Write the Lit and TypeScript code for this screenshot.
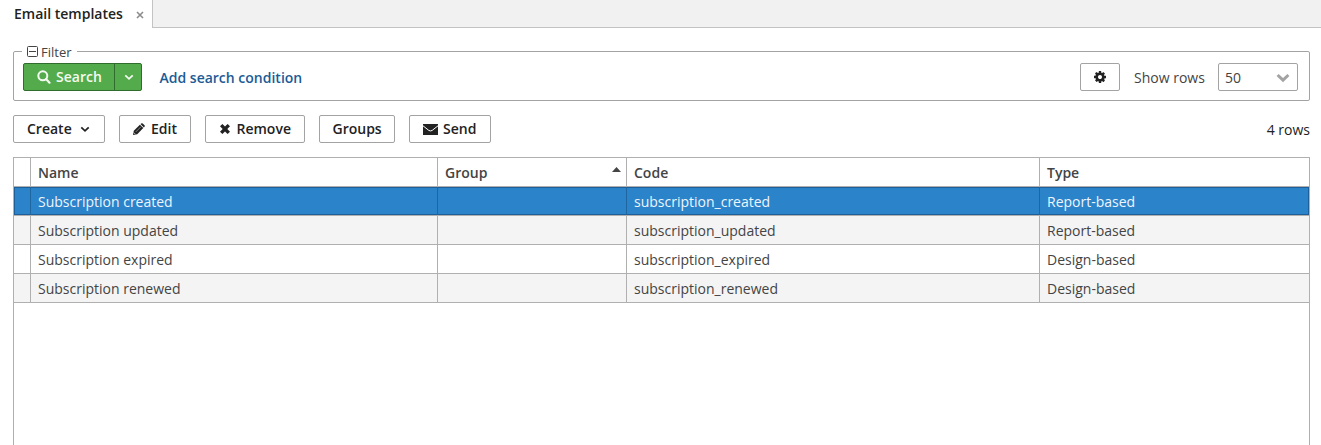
import { LitElement, html, css, svg } from "lit";
import { customElement, property } from "lit/decorators.js";

const icons: Record<string, { box: string; body: unknown }> = {
  search: {
    box: "0 0 14 14",
    body: svg`<circle cx="5.8" cy="5.8" r="4.5" fill="none" stroke="currentColor" stroke-width="2"/><path d="M9 9l3.500 3.700" fill="none" stroke="currentColor" stroke-width="2.200" stroke-linecap="round"/>`,
  },
  chevron: {
    box: "0 0 10 10",
    body: svg`<path d="M1.3 3.4L5 6.8L8.7 3.4" fill="none" stroke="currentColor" stroke-width="1.8"/>`,
  },
  pencil: {
    box: "0 0 12 12",
    body: svg`<path d="M0 12L.8 7.800 6.900 1.700 10.300 5.100 4.200 11.200z"/><path d="M7.500 1.100L8.300.4Q9-.1 9.700.5L11.500 2.300Q12.100 3 11.500 3.700L10.900 4.500z"/><path d="M2.800 8.900L7.900 3.800" stroke="#fff" stroke-width=".45"/><path d="M.8 9.600L2.400 11.200" stroke="#fff" stroke-width=".7"/>`,
  },
  cross: {
    box: "0 0 12 12",
    body: svg`<path d="M1 3.200L3.400 1 6 3.500 8.600 1 11 3.200 8.300 6 11 8.800 8.600 11 6 8.500 3.400 11 1 8.800 3.700 6z"/>`,
  },
  envelope: {
    box: "0 0 15 11",
    body: svg`<path d="M0 0h15v11H0z"/><path d="M0 1.800L5.800 6.400Q7.500 7.500 9.200 6.400L15 1.800" fill="none" stroke="#fff" stroke-width="1"/>`,
  },
  gear: {
    box: "0 0 1792 1792",
    body: svg`<path d="M1152 896q0-106-75-181t-181-75-181 75-75 181 75 181 181 75 181-75 75-181zm512-109v222q0 12-8 23t-20 13l-185 28q-19 54-39 91 35 50 107 138 10 12 10 25t-9 23q-27 37-99 108t-94 71q-12 0-26-9l-138-108q-44 23-91 38-16 136-29 186-7 28-36 28h-222q-14 0-24.500-8.500t-11.500-21.500l-28-184q-49-16-90-37l-141 107q-10 9-25 9-14 0-25-11-126-114-165-168-7-10-7-23 0-12 8-23 15-21 51-66.500t54-70.500q-27-50-41-99l-183-27q-13-2-21-12.500t-8-23.500v-222q0-12 8-23t19-13l186-28q14-46 39-92-40-57-107-138-10-12-10-24 0-10 9-23 26-36 98.500-107.500t94.500-71.500q13 0 26 10l138 107q44-23 91-38 16-136 29-186 7-28 36-28h222q14 0 24.500 8.500t11.500 21.500l28 184q49 16 90 37l142-107q9-9 24-9 13 0 25 10 129 119 165 170 7 8 7 22 0 12-8 23-15 21-51 66.500t-54 70.500q26 50 41 98l183 28q13 2 21 12.500t8 23.500z"/>`,
  },
  selectArrow: {
    box: "0 0 14 10",
    body: svg`<path d="M1.600 2L7 7.200 12.400 2" fill="none" stroke="currentColor" stroke-width="3"/>`,
  },
  close: {
    box: "0 0 8 8",
    body: svg`<path d="M1 1l6 6M7 1L1 7" stroke="currentColor" stroke-width="1.600"/>`,
  },
  collapse: {
    box: "0 0 11 11",
    body: svg`<rect x=".5" y=".5" width="10" height="10" rx="1" fill="none" stroke="currentColor"/><path d="M2 5.500h7" stroke="currentColor"/>`,
  },
  sortUp: { box: "0 0 9 5", body: svg`<path d="M0 5L4.500 0 9 5z"/>` },
};

@customElement("ui-icon")
export class UiIcon extends LitElement {
  @property() name = "";
  @property({ type: Number }) width = 12;
  @property({ type: Number }) height = 12;
  static styles = css`
    :host { display: inline-flex; flex: none; }
    svg { display: block; fill: currentColor; }
  `;
  render() {
    const icon = icons[this.name];
    return html`<svg width=${this.width} height=${this.height} viewBox=${icon.box}>${icon.body}</svg>`;
  }
}

const rows = [
  ["Subscription created", "", "subscription_created", "Report-based"],
  ["Subscription updated", "", "subscription_updated", "Report-based"],
  ["Subscription expired", "", "subscription_expired", "Design-based"],
  ["Subscription renewed", "", "subscription_renewed", "Design-based"],
];

@customElement("app-root")
export class AppRoot extends LitElement {
  static styles = css`
    :host {
      display: flex; flex-direction: column; height: 445px; overflow: hidden;
      box-sizing: border-box; background: #fff; color: #444;
      font: 14px/20px "Open Sans", sans-serif;
    }
    * { box-sizing: border-box; }
    .tabs { display: flex; height: 28px; flex: none; }
    .tab {
      width: 152px; padding: 4px 8px 0 14px; display: flex; justify-content: space-between;
      font-weight: 600; color: #222; white-space: nowrap;
    }
    .tab ui-icon { color: #8c8c8c; padding-top: 7px; }
    .rest { flex: 1; background: #f1f1f1; border-left: 1px solid #c3c3c3; border-bottom: 1px solid #c3c3c3; }
    .main { flex: 1; min-height: 0; display: flex; flex-direction: column; padding: 14px 11px 0 13px; }
    fieldset {
      margin: 0; padding: 0; border: 1px solid #a3a3a3; border-radius: 2px;
      height: 59px; min-width: 0; flex: none;
    }
    legend {
      margin-left: 8px; padding: 0 5px 0 5px; height: 19px; line-height: 20px; font-size: 13px;
      display: flex; align-items: center; gap: 3px;
    }
    .filter { display: flex; align-items: center; padding: 2px 11px 0 9px; }
    .split { display: flex; width: 119px; height: 28px; border: 1px solid #2f6c2d; border-radius: 2px; background: #54ab4b; color: #f3faf2; font-weight: 600; }
    .go { width: 91px; display: flex; align-items: center; padding-left: 13px; gap: 5px; border-right: 1px solid #2f6c2d; }
    .more { flex: 1; display: flex; align-items: center; justify-content: center; padding-left: 1px; }
    .link { margin: 2px 0 0 17.500px; color: #1b5b96; font-weight: 600; flex: 1; }
    .btn {
      height: 28px; border: 1px solid #a3a3a3; border-radius: 2px; background: #fff; color: #222;
      display: flex; align-items: center; font-weight: 600; padding: 0 13px; white-space: nowrap;
    }
    .settings { width: 40px; justify-content: center; padding: 0; }
    .label { margin: 2px 14px 0 14px; width: 70px; white-space: nowrap; }
    .select { width: 80px; height: 28px; border: 1px solid #a3a3a3; border-radius: 2px; display: flex; align-items: center; justify-content: space-between; padding: 1px 7px 0 6px; }
    .select ui-icon { color: #a3a3a3; }
    .actions { display: flex; gap: 14px; margin-top: 14px; height: 28px; flex: none; }
    .create { width: 92px; justify-content: space-between; padding-right: 14px; }
    .edit { width: 72px; gap: 6px; }
    .remove { width: 100px; gap: 5.500px; }
    .groups { width: 76px; padding-left: 12.500px; }
    .send { width: 82px; gap: 5px; }
    .count { margin-left: auto; color: #222; padding-top: 5px; }
    .grid { margin-top: 14px; flex: 1; border: 1px solid #b0b0b0; border-bottom: 0; }
    .row { display: grid; grid-template-columns: 17px 407px 189px 413px 1fr; height: 29px; border-bottom: 1px solid #b0b0b0; }
    .cell { border-right: 1px solid #b0b0b0; padding: 5px 7px 0; white-space: nowrap; }
    .cell:last-child { border-right: 0; }
    .head { font-weight: 600; }
    .head .cell { display: flex; justify-content: space-between; }
    .sort { padding-top: 4px; margin-right: -2px; }
    .alt { background: #f4f4f4; }
    .selected { background: #2b83ca; color: #eef5fb; box-shadow: inset 0 0 0 1px #1d5f98; }
    .selected .cell { border-color: #1f659f; }
  `;

  render() {
    return html`
      <div class="tabs">
        <div class="tab"><span>Email templates</span><ui-icon name="close" width="8" height="8"></ui-icon></div>
        <div class="rest"></div>
      </div>
      <div class="main">
        <fieldset>
          <legend><ui-icon name="collapse" width="11" height="11"></ui-icon>Filter</legend>
          <div class="filter">
            <div class="split">
              <div class="go"><ui-icon name="search" width="14" height="14"></ui-icon>Search</div>
              <div class="more"><ui-icon name="chevron" width="10" height="10"></ui-icon></div>
            </div>
            <span class="link">Add search condition</span>
            <div class="btn settings"><ui-icon name="gear" width="14" height="14"></ui-icon></div>
            <span class="label">Show rows</span>
            <div class="select"><span>50</span><ui-icon name="selectArrow" width="14" height="10"></ui-icon></div>
          </div>
        </fieldset>
        <div class="actions">
          <div class="btn create">Create<ui-icon name="chevron" width="10" height="10"></ui-icon></div>
          <div class="btn edit"><ui-icon name="pencil" width="12" height="12"></ui-icon>Edit</div>
          <div class="btn remove"><ui-icon name="cross" width="12" height="12"></ui-icon>Remove</div>
          <div class="btn groups">Groups</div>
          <div class="btn send"><ui-icon name="envelope" width="15" height="11"></ui-icon>Send</div>
          <span class="count">4 rows</span>
        </div>
        <div class="grid">
          <div class="row head">
            <div class="cell"></div>
            <div class="cell">Name</div>
            <div class="cell">Group<ui-icon class="sort" name="sortUp" width="9" height="5"></ui-icon></div>
            <div class="cell">Code</div>
            <div class="cell">Type</div>
          </div>
          ${rows.map(
            (r, i) => html`<div class="row ${i === 0 ? "selected" : i % 2 ? "alt" : ""}">
              <div class="cell"></div>
              ${r.map((c) => html`<div class="cell">${c}</div>`)}
            </div>`
          )}
        </div>
      </div>
    `;
  }
}
